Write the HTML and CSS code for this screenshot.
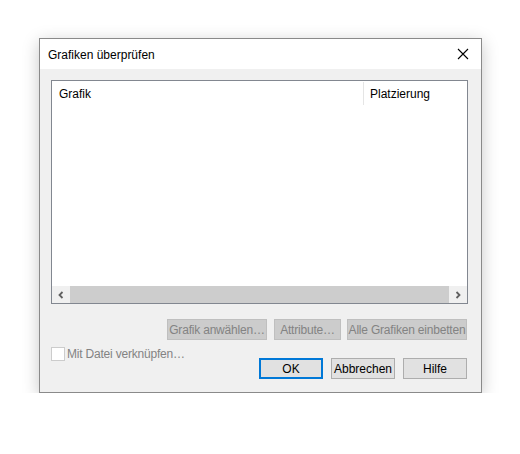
FILE: index.html
```html
<!DOCTYPE html>
<html lang="de">
<head>
  <meta charset="UTF-8">
  <title>Grafiken überprüfen</title>
  <link rel="stylesheet" href="styles.css">
</head>
<body>
  <div class="dialog">
    <div class="titlebar">
      <span class="title">Grafiken überprüfen</span>
      <svg class="close" width="12" height="12" viewBox="0 0 12 12">
        <path d="M1 1 L11 11 M11 1 L1 11" stroke="#000" stroke-width="1.1" fill="none"/>
      </svg>
    </div>

    <div class="content">
      <div class="listview">
        <div class="list-header">
          <div class="col col-grafik">Grafik</div>
          <div class="col col-platz">Platzierung</div>
        </div>
        <div class="list-body"></div>
        <div class="hscroll">
          <div class="arrow">
            <svg width="8" height="8" viewBox="0 0 8 8"><path d="M5.5 1 L2.5 4 L5.5 7" stroke="#606060" stroke-width="1.8" fill="none"/></svg>
          </div>
          <div class="thumb"></div>
          <div class="arrow">
            <svg width="8" height="8" viewBox="0 0 8 8"><path d="M2.5 1 L5.5 4 L2.5 7" stroke="#606060" stroke-width="1.8" fill="none"/></svg>
          </div>
        </div>
      </div>

      <div class="row-actions">
        <button class="btn disabled btn-select">Grafik anwählen…</button>
        <button class="btn disabled btn-attr">Attribute…</button>
        <button class="btn disabled btn-embed">Alle Grafiken einbetten</button>
      </div>

      <div class="row-bottom">
        <label class="check">
          <span class="box"></span>
          <span>Mit Datei verknüpfen…</span>
        </label>
        <div class="buttons">
          <button class="btn default">OK</button>
          <button class="btn">Abbrechen</button>
          <button class="btn">Hilfe</button>
        </div>
      </div>
    </div>
  </div>
</body>
</html>
```

FILE: styles.css
```css
body {
  margin: 0;
  background-color: #ffffff;
  font-family: "Liberation Sans", Arial, sans-serif;
  font-size: 12px;
  color: #000;
}

.dialog {
  width: 441px;
  margin: 38px 0 0 39px;
  border: 1px solid #8a8a8a;
  background-color: #f0f0f0;
  box-shadow: 0 4px 16px rgba(0, 0, 0, 0.22);
}

.titlebar {
  height: 30px;
  background-color: #fff;
  display: flex;
  align-items: center;
  justify-content: space-between;
  padding: 0 9px 0 8px;
}

.title {
  font-size: 12px;
  padding-top: 1px;
}

.close {
  margin-right: 3px;
  margin-top: -1px;
}

.content {
  padding: 11px 13px 13px 11px;
}

.listview {
  height: 222px;
  border: 1px solid #828790;
  background-color: #fff;
  display: flex;
  flex-direction: column;
}

.list-header {
  display: flex;
  height: 24px;
}

.col {
  display: flex;
  align-items: center;
  padding-top: 1px;
}

.col-grafik {
  width: 304px;
  padding-left: 7px;
  border-right: 1px solid #e5e5e5;
  margin: 1px 0 0;
}

.col-platz {
  padding-left: 6px;
}

.list-body {
  flex: 1;
}

.hscroll {
  height: 17px;
  display: flex;
  background-color: #f0f0f0;
}

.arrow {
  width: 18px;
  display: flex;
  align-items: center;
  justify-content: center;
}

.thumb {
  flex: 1;
  background-color: #cdcdcd;
}

.row-actions {
  display: flex;
  justify-content: flex-end;
  margin: 15px 1px 0 0;
}

.btn {
  height: 21px;
  padding: 0;
  border: 1px solid #adadad;
  background-color: #e1e1e1;
  font-family: inherit;
  font-size: 12px;
  color: #000;
  white-space: nowrap;
}

.btn.disabled {
  border-color: #bfbfbf;
  background-color: #cccccc;
  color: #838383;
  letter-spacing: -0.2px;
}

.btn-select { width: 100px; }
.btn-attr { width: 67px; margin-left: 7px; }
.btn-embed { width: 120px; margin-left: 6px; }

.row-bottom {
  display: flex;
  justify-content: space-between;
  align-items: flex-start;
  margin-right: 1px;
}

.check {
  display: flex;
  align-items: center;
  gap: 2px;
  margin-top: 7px;
  color: #838383;
  white-space: nowrap;
  letter-spacing: -0.2px;
}

.box {
  width: 12px;
  height: 12px;
  border: 1px solid #cccccc;
  background-color: #fff;
}

.buttons {
  display: flex;
  gap: 8px;
  margin-top: 18px;
}

.buttons .btn {
  width: 64px;
}

.btn.default {
  border: 2px solid #0078d7;
}
```
